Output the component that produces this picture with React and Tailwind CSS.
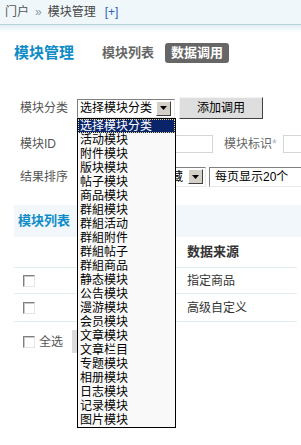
import React from "react";

const items = [
  "选择模块分类", "活动模块", "附件模块", "版块模块", "帖子模块", "商品模块",
  "群組模块", "群組活动", "群組附件", "群組帖子", "群組商品", "静态模块",
  "公告模块", "漫游模块", "会员模块", "文章模块", "文章栏目", "专题模块",
  "相册模块", "日志模块", "记录模块", "图片模块",
];

function Arrow() {
  return (
    <span className="flex h-[15px] w-[15px] shrink-0 items-center justify-center border border-t-white border-l-white border-b-[#404040] border-r-[#404040] bg-[#d4d0c8]">
      <svg width="7" height="4" viewBox="0 0 7 4"><path d="M0 0H7L3.5 4Z" fill="#000" /></svg>
    </span>
  );
}

function Check() {
  return (
    <span className="block h-[12px] w-[12px] shrink-0 border border-t-[#808080] border-l-[#808080] border-b-[#e4e4e4] border-r-[#e4e4e4] bg-white shadow-[inset_1px_1px_0_#c8c8c8]" />
  );
}

export default function App() {
  return (
    <div className="relative h-[445px] w-[301px] overflow-hidden whitespace-nowrap bg-white text-[12px] leading-[14px] text-[#555] font-['Liberation_Sans','Noto_Sans_CJK_SC',sans-serif]">
      {/* breadcrumb */}
      <div className="flex h-[25px] items-center border-b border-[#b6d2db] bg-[#eff7fa] pl-[5px] text-[#555]">
        <span>门户</span>
        <span className="mx-[6px] text-[#8a9aa8]">»</span>
        <span className="text-[#444]">模块管理</span>
        <span className="ml-[9px] text-[#2a62c0]">[+]</span>
      </div>
      <div className="h-[8px] bg-gradient-to-b from-[#e2eff5] to-white" />

      {/* title row */}
      <div className="mt-[10px] flex h-[20px] items-center pl-[14px]">
        <span className="text-[15px] font-bold text-[#0e8cc8]">模块管理</span>
        <span className="ml-[28px] text-[13px] font-bold text-[#666]">模块列表</span>
        <span className="ml-[11px] flex h-[20px] items-center rounded-[3px] bg-[#666] px-[6px] text-[13px] font-bold text-white">数据调用</span>
      </div>

      {/* form row 1 */}
      <div className="mt-[34px] flex h-[22px] items-center pl-[20px]">
        <span className="w-[57px] shrink-0">模块分类</span>
        <div className="flex h-[19px] w-[98px] shrink-0 items-center border border-t-[#808080] border-l-[#808080] border-b-[#e8e8e8] border-r-[#e8e8e8] bg-white pl-[2px] pr-[3px] text-black">
          <span className="flex-1">选择模块分类</span>
          <Arrow />
        </div>
        <div className="ml-[4px] flex h-[22px] w-[84px] shrink-0 items-center justify-center border border-t-[#f4f4f4] border-l-[#f4f4f4] border-b-[#404040] border-r-[#404040] bg-[#dedede] text-black">添加调用</div>
      </div>

      {/* form row 2 */}
      <div className="mt-[16px] flex h-[18px] items-center pl-[20px]">
        <span className="w-[57px] shrink-0">模块ID</span>
        <div className="h-[18px] w-[136px] shrink-0 border border-[#d6d6d6] bg-white" />
        <span className="ml-[11px] shrink-0 text-[#666]">模块标识<span className="text-[#a8b4c0]">*</span></span>
        <div className="ml-[6px] h-[18px] w-[40px] shrink-0 border border-[#d6d6d6] bg-white" />
      </div>

      {/* form row 3 */}
      <div className="mt-[13px] flex h-[21px] items-center pl-[20px]">
        <span className="w-[57px] shrink-0">结果排序</span>
        <div className="flex h-[20px] w-[129px] shrink-0 items-center justify-end overflow-hidden border border-t-[#808080] border-l-[#808080] border-b-[#e8e8e8] border-r-[#e8e8e8] bg-white pr-[2px] text-black">
          <span className="mr-[5px]">按收藏</span>
          <Arrow />
        </div>
        <div className="ml-[3px] flex h-[20px] w-[120px] shrink-0 items-center border border-t-[#808080] border-l-[#808080] border-b-[#e8e8e8] border-r-[#e8e8e8] bg-white pl-[5px] text-black">
          每页显示20个
        </div>
      </div>

      {/* section header */}
      <div className="ml-[14px] mt-[18px] flex h-[32px] items-center bg-[#f1f7fb] pl-[4px]">
        <span className="text-[13px] font-bold text-[#0e8cc8]">模块列表</span>
      </div>

      {/* table */}
      <div className="ml-[14px] w-[283px]">
        <div className="flex h-[31px] items-center border-b border-[#e2edf2]">
          <span className="ml-[173px] text-[13px] font-bold text-[#333]">数据来源</span>
        </div>
        <div className="flex h-[26px] items-center border-b border-[#e2edf2]">
          <span className="ml-[9px]"><Check /></span>
          <span className="ml-[152px] text-[#333]">指定商品</span>
        </div>
        <div className="flex h-[28px] items-center border-b border-[#e2edf2]">
          <span className="ml-[9px]"><Check /></span>
          <span className="ml-[152px] text-[#333]">高级自定义</span>
        </div>
        <div className="mt-[8px] flex h-[23px] items-center">
          <span className="ml-[9px]"><Check /></span>
          <span className="ml-[4px]">全选</span>
          <div className="ml-[9px] h-[23px] w-[60px] shrink-0 bg-[#dcdcdc]" />
        </div>
      </div>

      {/* open dropdown list */}
      <div className="absolute left-[77px] top-[118px] w-[99px] border border-black bg-[#f9f9f9] text-black">
        {items.map((t, i) => (
          <div
            key={t}
            className={
              i === 0
                ? "h-[14px] border border-dotted border-[#e8d890] bg-[#0a246a] pl-[1px] leading-[12px] text-white"
                : "h-[14px] pl-[2px] leading-[14px]"
            }
          >
            {t}
          </div>
        ))}
      </div>
    </div>
  );
}
